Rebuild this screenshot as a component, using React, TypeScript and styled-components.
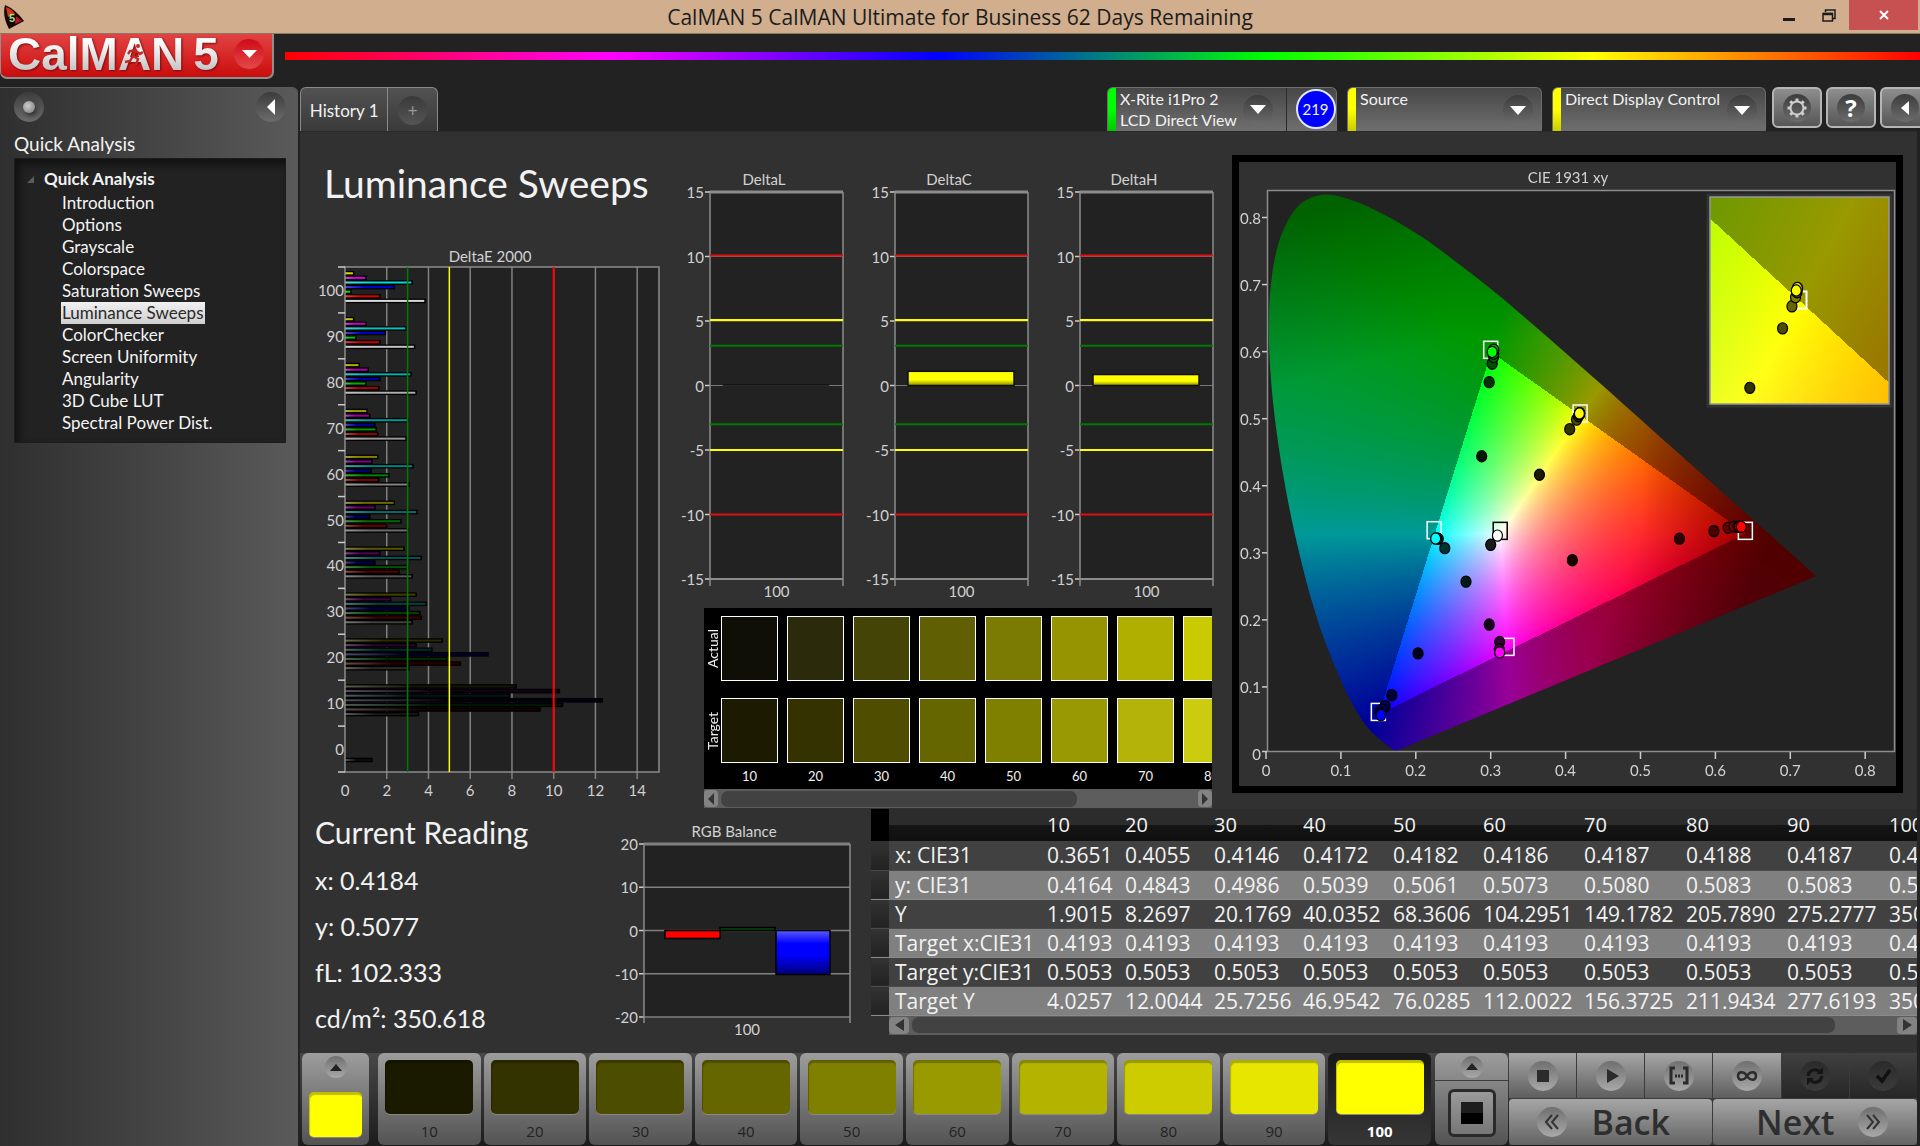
import React, { useLayoutEffect, useRef } from "react";
import styled, { createGlobalStyle, css } from "styled-components";

const HUMANIST = `Lato, "Open Sans", sans-serif`;
const SYSTEM = `"Open Sans", "Noto Sans", sans-serif`;

const GlobalStyle = createGlobalStyle`
  * { box-sizing: border-box; }
  html, body { margin: 0; background: #222; }
  body { font-family: ${HUMANIST}; color: #f2f2f2; overflow: hidden; }
  button, select { font: inherit; color: inherit; margin: 0; padding: 0; border: 0; background: none; cursor: pointer; }
  h1, h2, p, ul { margin: 0; padding: 0; }
`;

/* ---------- frame ---------- */

const Page = styled.div`
  min-height: 100vh;
  display: flex;
  flex-direction: column;
  background: #222;
`;

const TitleBar = styled.header`
  display: grid;
  grid-template-columns: 1fr auto 1fr;
  align-items: center;
  height: 34px;
  background: #d0ae8e;
  border-bottom: 1px solid #8d765f;
  color: #1c1c1c;
  font-family: ${SYSTEM};
  font-size: 21px;
`;

const AppIcon = styled.svg`
  margin-left: 3px;
`;

const WindowTitle = styled.span`
  white-space: nowrap;
  line-height: 34px;
`;

const WindowButtons = styled.div`
  display: flex;
  justify-content: flex-end;
  align-self: start;
  padding-right: 2px;
`;

const WindowButton = styled.button<{ $close?: boolean }>`
  width: ${(p) => (p.$close ? 69 : 40)}px;
  height: 30px;
  display: grid;
  place-items: center;
  background: ${(p) => (p.$close ? "#c75050" : "transparent")};
`;

const Brand = styled.div`
  display: flex;
  align-items: flex-start;
  gap: 11px;
  height: 53px;
`;

const Logo = styled.button`
  display: flex;
  align-items: center;
  justify-content: space-between;
  width: 274px;
  height: 45px;
  padding: 0 8px 4px 7px;
  border: 2px solid #8f8f8f;
  border-width: 0 2px 2px 1px;
  border-radius: 0 0 7px 7px;
  background: linear-gradient(#df4444, #d62222 60%, #c90d0d);
`;

const LogoText = styled.span`
  position: relative;
  display: flex;
  gap: 9px;
  font-family: "Liberation Sans", sans-serif;
  font-weight: 700;
  font-size: 46px;
  line-height: 40px;
  color: transparent;
  background: linear-gradient(#fff 15%, #e6e6e6 50%, #bdbdbd);
  background-clip: text;
  filter: drop-shadow(1px 1px 1px #7a0a0a);
`;

const Runner = styled.svg`
  position: absolute;
  left: 114px;
  top: 8px;
`;

const Rainbow = styled.div`
  flex: 1;
  height: 8px;
  margin-top: 18px;
  background: linear-gradient(90deg, #f00, #f0f, #00f, #0f0, #ff0, #f00);
`;

const Body = styled.div`
  flex: 1;
  display: flex;
  gap: 2px;
`;

/* ---------- shared bits ---------- */

const Disc = styled.span<{ $size: number; $dark?: boolean }>`
  flex: none;
  display: grid;
  place-items: center;
  width: ${(p) => p.$size}px;
  height: ${(p) => p.$size}px;
  border-radius: 50%;
  background: ${(p) =>
    p.$dark ? "linear-gradient(#3c3c3c, #6c6c6c)" : "linear-gradient(#6f6f6f, #a9a9a9)"};
`;

const LogoDisc = styled(Disc)`
  background: linear-gradient(#cf0a18, #e24a4a);
`;

const Arrow = ({ dir, w = 16, h = 9, fill = "#fff" }: { dir: "up" | "down" | "left" | "right"; w?: number; h?: number; fill?: string }) => {
  const pts = {
    down: `0,0 ${w},0 ${w / 2},${h}`,
    up: `0,${h} ${w},${h} ${w / 2},0`,
    left: `${w},0 ${w},${h} 0,${h / 2}`,
    right: `0,0 0,${h} ${w},${h / 2}`,
  }[dir];
  return (
    <svg width={w} height={h} aria-hidden="true">
      <polygon points={pts} fill={fill} />
    </svg>
  );
};

/* ---------- sidebar ---------- */

const Sidebar = styled.nav`
  width: 298px;
  flex: none;
  padding: 4px 12px 0 14px;
  border-top: 1px solid #5c5c5c;
  border-radius: 0 6px 0 0;
  background: linear-gradient(90deg, #2f2f2f, #444 50%, #5a5a5a);
`;

const SidebarTop = styled.div`
  display: flex;
  justify-content: space-between;
  height: 37px;
`;

const Lamp = styled.span`
  width: 12px;
  height: 12px;
  border-radius: 50%;
  background: radial-gradient(circle at 40% 40%, #ccc, #777);
  box-shadow: 2px 3px 4px #333;
`;

const SidebarTitle = styled.h2`
  font-weight: 400;
  font-size: 19px;
  line-height: 30px;
`;

const Tree = styled.div`
  height: 285px;
  margin-top: -1px;
  padding: 9px 0 0 12px;
  background: #222;
  border: 1px solid #1c1c1c;
  box-shadow: inset 4px 5px 8px #111;
`;

const TreeRoot = styled.div`
  display: flex;
  align-items: center;
  gap: 10px;
  font-weight: 700;
  font-size: 17px;
  line-height: 22px;
`;

const TreeList = styled.ul`
  list-style: none;
  padding: 2px 0 0 34px;
`;

const TreeItem = styled.li`
  display: flex;
  height: 22px;
`;

const TreeLink = styled.a<{ $active?: boolean }>`
  padding: 0 1px;
  font-size: 17px;
  line-height: 22px;
  text-decoration: none;
  white-space: nowrap;
  color: ${(p) => (p.$active ? "#2a2a2a" : "#f4f4f4")};
  background: ${(p) => (p.$active ? "linear-gradient(#f0f0f0, #cfcfcf)" : "none")};
`;

const TREE = [
  "Introduction", "Options", "Grayscale", "Colorspace", "Saturation Sweeps", "Luminance Sweeps",
  "ColorChecker", "Screen Uniformity", "Angularity", "3D Cube LUT", "Spectral Power Dist.",
];

/* ---------- top bar ---------- */

const Main = styled.main`
  flex: 1;
  min-width: 0;
  display: flex;
  flex-direction: column;
`;

const TopBar = styled.div`
  display: flex;
  justify-content: space-between;
  height: 44px;
`;

const Tabs = styled.div`
  display: flex;
  width: 138px;
  border: 1px solid #8a8a8a;
  border-bottom: 0;
  border-radius: 6px 6px 0 0;
  background: linear-gradient(#525252, #3a3a3a);
`;

const Tab = styled.button<{ $w: number }>`
  width: ${(p) => p.$w}px;
  display: grid;
  place-items: center;
  font-size: 17px;
  padding-top: 2px;
  white-space: nowrap;
  & + & { border-left: 1px solid #8a8a8a; color: #999; }
`;

const PlusDisc = styled(Disc)`
  background: linear-gradient(#3a3a3a, #555);
`;

const Devices = styled.div`
  display: flex;
  gap: 10px;
  overflow: hidden;
`;

const panelTab = css`
  border: 1px solid #6d6d6d;
  border-bottom: 0;
  border-radius: 6px 6px 0 0;
  background: linear-gradient(#474747, #6f6f6f);
  overflow: hidden;
`;

const Meter = styled.div`
  ${panelTab}
  display: flex;
  width: 230px;
`;

const Stripe = styled.span<{ $color: string; $end: string }>`
  flex: none;
  width: 8px;
  background: linear-gradient(${(p) => p.$color} 50%, ${(p) => p.$end});
`;

const MeterButton = styled.button`
  flex: 1;
  display: flex;
  align-items: flex-start;
  justify-content: space-between;
  padding: 0 13px 0 4px;
  text-align: left;
  font-size: 16px;
  line-height: 21px;
  white-space: nowrap;
`;

const MeterDisc = styled(Disc)`
  align-self: center;
`;

const Reading = styled.div`
  width: 50px;
  display: grid;
  place-items: center;
  padding: 0 0 2px 8px;
  border-left: 1px solid #2b2b2b;
`;

const Count = styled.span`
  width: 40px;
  height: 40px;
  border: 2px solid #dfe6ff;
  border-radius: 50%;
  background: #00f;
  text-align: center;
  font-size: 15px;
  line-height: 36px;
`;

const Chooser = styled.label<{ $w: number }>`
  ${panelTab}
  position: relative;
  display: flex;
  width: ${(p) => p.$w}px;
`;

const ChooserSelect = styled.select`
  appearance: none;
  flex: 1;
  min-width: 0;
  padding: 0 0 22px 4px;
  font-size: 16px;
  line-height: 21px;
  outline: none;
`;

const ChooserDisc = styled(Disc)`
  position: absolute;
  right: 8px;
  top: 7px;
  pointer-events: none;
`;

const ToolButtons = styled.div`
  display: flex;
  gap: 4px;
  margin: 0 -10px 0 -4px;
`;

const ToolButton = styled.button`
  width: 50px;
  height: 41px;
  display: grid;
  place-items: center;
  border: 2px solid #b5b5b5;
  border-radius: 6px;
  background: linear-gradient(#8e8e8e, #565656);
`;

/* ---------- content panel ---------- */

const Panel = styled.section`
  flex: 1;
  display: flex;
  flex-direction: column;
  margin-right: 3px;
  background: #313131;
  border-top: 1px solid #2a2a2a;
`;

const Upper = styled.div`
  display: flex;
  height: 677px;
`;

const Sweeps = styled.div`
  width: 375px;
  flex: none;
`;

const Heading = styled.h1`
  height: 108px;
  padding: 24px 0 0 24px;
  font-weight: 400;
  font-size: 39px;
  line-height: 54px;
  white-space: nowrap;
`;

const Middle = styled.div`
  width: 557px;
  flex: none;
  padding-top: 33px;
`;

const DeltaRow = styled.div`
  display: flex;
  height: 443px;
`;

const Compare = styled.div`
  width: 508px;
  margin-left: 29px;
  background: #000;
`;

const Swatches = styled.div`
  height: 181px;
  padding: 8px 0 0 3px;
  overflow: hidden;
`;

const SwatchRow = styled.div`
  display: flex;
  gap: 9px;
  margin-bottom: 17px;
  & > * { flex: none; }
`;

const SwatchName = styled.span`
  width: 12px;
  margin-right: -7px;
  writing-mode: vertical-rl;
  transform: rotate(180deg);
  text-align: center;
  font-size: 14px;
  line-height: 12px;
`;

const Swatch = styled.span<{ $c: string }>`
  width: 57px;
  height: 65px;
  border: 1px solid #fff;
  background: ${(p) => p.$c};
`;

const SwatchLabels = styled.div`
  display: flex;
  gap: 9px;
  margin: -15px 0 0 14px;
`;

const SwatchLabel = styled.span`
  flex: none;
  width: 57px;
  text-align: center;
  font-size: 13px;
  line-height: 22px;
`;

const Track = styled.div`
  display: flex;
  align-items: center;
  gap: 3px;
  height: 19px;
  background: #5d5d5d;
`;

const TrackButton = styled.button<{ $w: number }>`
  flex: none;
  width: ${(p) => p.$w}px;
  height: 17px;
  display: grid;
  place-items: center;
  border-radius: 4px;
  background: #838383;
`;

const TrackBed = styled.div`
  flex: 1;
`;

const Thumb = styled.div<{ $w: string }>`
  width: ${(p) => p.$w};
  height: 16px;
  border-radius: 7px;
  background: #424242;
`;

const ScrollTrack = ({ thumb, button }: { thumb: string; button: number }) => (
  <Track>
    <TrackButton $w={button} aria-label="Scroll left"><Arrow dir="left" w={button / 2 - 1} h={12} fill="#333" /></TrackButton>
    <TrackBed><Thumb $w={thumb} /></TrackBed>
    <TrackButton $w={button} aria-label="Scroll right"><Arrow dir="right" w={button / 2 - 1} h={12} fill="#333" /></TrackButton>
  </Track>
);

const Chromaticity = styled.div`
  flex: 1;
  align-self: flex-start;
  display: grid;
  margin: 23px 14px 0 0;
  border: 7px solid #000;
  background: #313131;
  & > * { grid-area: 1 / 1; width: 100%; height: auto; display: block; }
`;

const Lower = styled.div`
  flex: 1;
  display: flex;
  align-items: flex-start;
`;

const Readings = styled.div`
  width: 315px;
  flex: none;
  padding-left: 15px;
`;

const ReadingsTitle = styled.h2`
  font-weight: 400;
  font-size: 30px;
  line-height: 46px;
  margin-bottom: 2px;
`;

const ReadingLine = styled.p`
  font-size: 25px;
  line-height: 46px;
`;

const TableArea = styled.div`
  flex: 1;
  min-width: 0;
  overflow: hidden;
`;

const TableClip = styled.div`
  overflow: hidden;
`;

const TableTrack = styled.div`
  margin-left: 18px;
`;

const Data = styled.table`
  width: 1120px;
  table-layout: fixed;
  border-collapse: collapse;
  font-family: ${SYSTEM};
  font-size: 21px;
  white-space: nowrap;
  th, td { padding: 0 0 0 6px; font-weight: 400; text-align: left; }
`;

const HeadRow = styled.tr`
  height: 32px;
  font-size: 20px;
  line-height: 30px;
  background: linear-gradient(#2c2c2c 50%, #151515 50%, #0f0f0f);
  th:first-child { background: #000; }
`;

const DataRow = styled.tr<{ $light: boolean }>`
  height: 29px;
  line-height: 28px;
  background: ${(p) => (p.$light ? "#808080" : "#414141")};
  border-bottom: 1px solid ${(p) => (p.$light ? "#8a8a8a" : "#4b4b4b")};
  td:first-child { background: linear-gradient(#333, #222); }
`;

const COLS = [18, 152, 78, 89, 89, 90, 90, 101, 102, 101, 102, 108];
const LEVELS = [10, 20, 30, 40, 50, 60, 70, 80, 90, 100];
const TABLE: [string, string[]][] = [
  ["x: CIE31", ["0.3651", "0.4055", "0.4146", "0.4172", "0.4182", "0.4186", "0.4187", "0.4188", "0.4187", "0.4184"]],
  ["y: CIE31", ["0.4164", "0.4843", "0.4986", "0.5039", "0.5061", "0.5073", "0.5080", "0.5083", "0.5083", "0.5077"]],
  ["Y", ["1.9015", "8.2697", "20.1769", "40.0352", "68.3606", "104.2951", "149.1782", "205.7890", "275.2777", "350.6180"]],
  ["Target x:CIE31", LEVELS.map(() => "0.4193")],
  ["Target y:CIE31", LEVELS.map(() => "0.5053")],
  ["Target Y", ["4.0257", "12.0044", "25.7256", "46.9542", "76.0285", "112.0022", "156.3725", "211.9434", "277.6193", "350.6180"]],
];

/* ---------- footer ---------- */

const Footer = styled.footer`
  display: flex;
  height: 93px;
  margin-right: 3px;
  padding-bottom: 1px;
  background: linear-gradient(#484848, #1c1c1c);
`;

const key = css`
  border-radius: 6px;
  background: linear-gradient(#9d9d9d, #535353);
`;

const CurrentColor = styled.button`
  ${key}
  flex: none;
  display: flex;
  flex-direction: column;
  align-items: center;
  justify-content: space-between;
  width: 67px;
  margin: 0 9px 0 2px;
  padding: 3px 0 8px;
`;

const Chip = styled.span<{ $c: string; $w: number; $h: number }>`
  width: ${(p) => p.$w}px;
  height: ${(p) => p.$h}px;
  border-radius: 5px;
  background: ${(p) => p.$c};
  box-shadow: inset 1px 3px 1px rgba(0, 0, 0, 0.25), 0 1px 0 #888;
`;

const LevelKeys = styled.div`
  flex: 1;
  display: grid;
  grid-template-columns: repeat(10, 1fr);
  gap: 3px;
`;

const LevelKey = styled.button<{ $active: boolean }>`
  ${key}
  display: flex;
  flex-direction: column;
  align-items: center;
  gap: 6px;
  padding-top: 7px;
  font-family: ${SYSTEM};
  font-size: 15px;
  line-height: 22px;
  color: #222;
  ${(p) => p.$active && css`
    background: linear-gradient(#191919, #363636);
    color: #fff;
    font-weight: 700;
  `}
`;

const PatternKey = styled.div`
  ${key}
  flex: none;
  width: 73px;
  margin: 0 1px 0 4px;
  display: grid;
  grid-template-rows: 28px 1fr;
  overflow: hidden;
`;

const PatternUp = styled.button`
  display: grid;
  place-items: center;
  border-bottom: 1px solid #3c3c3c;
`;

const PatternBox = styled.button`
  place-self: center;
  width: 48px;
  height: 48px;
  display: grid;
  place-items: center;
  border: 3px solid #2a2a2a;
  border-radius: 6px;
  background: linear-gradient(#9a9a9a, #767676);
`;

const Transport = styled.div`
  flex: none;
  width: 408px;
  display: grid;
  grid-template-columns: repeat(6, 1fr);
  grid-template-rows: 45px 46px;
  gap: 1px;
  background: #3b3b3b;
`;

const TransportKey = styled.button<{ $off?: boolean }>`
  display: grid;
  place-items: center;
  background: ${(p) => (p.$off ? "linear-gradient(#404040, #262626)" : "linear-gradient(#a6a6a6, #5e5e5e)")};
`;

const DimDisc = styled(Disc)`
  background: linear-gradient(#2b2b2b, #3b3b3b);
`;

const StepKey = styled.button<{ $next?: boolean }>`
  grid-column: span 3;
  display: flex;
  align-items: center;
  justify-content: center;
  gap: 24px;
  padding: ${(p) => (p.$next ? "0 0 0 14px" : "0 14px 0 0")};
  border-radius: 4px;
  background: linear-gradient(#a6a6a6, #646464);
  font-family: ${SYSTEM};
  font-weight: 600;
  font-size: 34px;
  line-height: 40px;
  color: #2e2e2e;
`;

/* ---------- charts ---------- */

const ChartSvg = styled.svg`
  display: block;
  flex: none;
  text { font-family: ${HUMANIST}; font-size: 15px; fill: #d2d2d2; }
`;

const HUES = ["#ffff00", "#ff00ff", "#00ffff", "#0000ff", "#00ff00", "#ff0000", "#ffffff"];

/* DeltaE per level, in the order of HUES; each row runs from 100 % down to 0 %. */
const DELTA_E: number[][] = [
  [0.45, 1.04, 3.25, 2.4, 0.32, 1.71, 3.87],
  [0.45, 1.04, 2.96, 1.97, 0.56, 1.71, 3.37],
  [0.72, 1.15, 3.2, 1.71, 1.04, 1.66, 3.44],
  [1.09, 1.22, 3.04, 1.47, 1.53, 1.6, 2.96],
  [1.61, 1.33, 3.29, 1.29, 2.14, 1.65, 3.1],
  [2.4, 1.47, 3.49, 1.22, 2.72, 2.05, 3.04],
  [2.86, 1.71, 3.69, 1.47, 3.04, 2.62, 3.25],
  [3.44, 2.22, 3.93, 3.1, 3.63, 3.69, 3.25],
  [4.7, 3.44, 4.2, 6.89, 4.91, 5.56, 3.1],
  [8.23, 10.31, 7.9, 12.36, 10.46, 9.38, 3.55],
  [0, 0, 0, 0, 0, 0, 1.33],
];

const DeltaEChart = () => {
  const L = 45, T = 27, W = 314, H = 505, U = 20.87, BAND = H / 11;
  const x = (v: number) => L + v * U;
  return (
    <ChartSvg width="375" height="569" role="img" aria-label="DeltaE 2000">
      <text x="190" y="22" textAnchor="middle">DeltaE 2000</text>
      <rect x={L} y={T} width={W} height={H} fill="#222" />
      {[2, 4, 6, 8, 10, 12, 14].map((v) => (
        <line key={v} x1={x(v)} x2={x(v)} y1={T} y2={T + H + 7} stroke="#808080" strokeWidth="1.5" />
      ))}
      {DELTA_E.map((row, i) => {
        const level = 100 - i * 10;
        const lum = Math.max(0.06, level / 100);
        return row.map((v, j) =>
          v > 0 ? (
            <g key={`${i}-${j}`}>
              <rect x={L} y={T + i * BAND + 4 + j * 4.6} width={v * U} height="4.6" fill="#000" />
              <rect x={L} y={T + i * BAND + 5.3 + j * 4.6} width={Math.max(0, v * U - 1.5)} height="2" fill={HUES[j]} opacity={lum * 0.85} />
              <rect x={L} y={T + i * BAND + 5.3 + j * 4.6} width={v * U * 0.4} height="2" fill="url(#sheen)" />
            </g>
          ) : null
        );
      })}
      <defs>
        <linearGradient id="sheen">
          <stop offset="0" stopColor="#ddd" stopOpacity="0.35" />
          <stop offset="1" stopColor="#ddd" stopOpacity="0" />
        </linearGradient>
      </defs>
      <rect x={L} y={T} width={W} height={H} fill="none" stroke="#8c8c8c" strokeWidth="1.5" />
      <line x1={x(3)} x2={x(3)} y1={T} y2={T + H} stroke="#007a00" strokeWidth="1.5" />
      <line x1={x(5)} x2={x(5)} y1={T} y2={T + H} stroke="#ff0" strokeWidth="1.5" />
      <line x1={x(10)} x2={x(10)} y1={T} y2={T + H} stroke="#f00" strokeWidth="2" />
      {DELTA_E.map((_, i) => (
        <g key={i}>
          <line x1={L - 7} x2={L} y1={T + i * BAND} y2={T + i * BAND} stroke="#ccc" strokeWidth="1.5" />
          <text x={L - 1} y={T + i * BAND + 29} textAnchor="end">{100 - i * 10}</text>
        </g>
      ))}
      <line x1={L - 7} x2={L} y1={T + H} y2={T + H} stroke="#ccc" strokeWidth="1.5" />
      {[0, 2, 4, 6, 8, 10, 12, 14].map((v) => (
        <text key={v} x={x(v)} y="556" textAnchor="middle">{v}</text>
      ))}
    </ChartSvg>
  );
};

const DeltaChart = ({ title, value }: { title: string; value: number }) => {
  const L = 35, T = 27, W = 133, H = 387;
  const y = (v: number) => T + ((15 - v) / 30) * H;
  const limits: [number, string][] = [[10, "#e01010"], [5, "#ff0"], [3, "#007a00"], [-3, "#007a00"], [-5, "#ff0"], [-10, "#e01010"]];
  const h = Math.max(1, (value / 30) * H);
  return (
    <ChartSvg width="185" height="443" role="img" aria-label={title}>
      <defs>
        <linearGradient id="bar" x1="0" x2="0" y1="0" y2="1">
          <stop offset="0.6" stopColor="#ff0" />
          <stop offset="1" stopColor="#8a8a00" />
        </linearGradient>
      </defs>
      <text x="89" y="20" textAnchor="middle">{title}</text>
      <rect x={L} y={T} width={W} height={H} fill="#222" />
      {[15, 10, 5, 0, -5, -10, -15].map((v) => (
        <g key={v}>
          <line x1={L} x2={L + W} y1={y(v)} y2={y(v)} stroke="#777" strokeWidth="1" />
          <line x1={L - 5} x2={L} y1={y(v)} y2={y(v)} stroke="#ccc" strokeWidth="1.5" />
          <text x={L - 6} y={y(v) + 6} textAnchor="end">{v}</text>
        </g>
      ))}
      <line x1={L} x2={L + W} y1={T} y2={T} stroke="#8c8c8c" strokeWidth="3" />
      <line x1={L} x2={L + W} y1={T + H} y2={T + H} stroke="#8c8c8c" strokeWidth="2" />
      <path d={`M${L} ${T}V${T + H + 7}M${L + W} ${T}V${T + H + 7}`} stroke="#8c8c8c" strokeWidth="1.5" />
      {limits.map(([v, c]) => (
        <line key={v} x1={L} x2={L + W} y1={y(v) - (v > 0 ? 1 : 0)} y2={y(v) - (v > 0 ? 1 : 0)} stroke={c} strokeWidth="2" />
      ))}
      <rect x={L + 13} y={y(0) - h} width="106" height={h} fill={value > 0.1 ? "url(#bar)" : "#111"} stroke="#111" strokeWidth={value > 0.1 ? 1.5 : 0.5} />
      <text x={L + W / 2} y="432" textAnchor="middle">100</text>
    </ChartSvg>
  );
};

const RgbBalance = () => {
  const L = 29, T = 35, W = 206, H = 173;
  const y = (v: number) => T + ((20 - v) / 40) * H;
  return (
    <ChartSvg width="256" height="240" role="img" aria-label="RGB Balance">
      <defs>
        <linearGradient id="blue" x1="0" x2="0" y1="0" y2="1">
          <stop offset="0" stopColor="#5a5aff" />
          <stop offset="0.3" stopColor="#00f" />
          <stop offset="0.55" stopColor="#00f" />
          <stop offset="1" stopColor="#000078" />
        </linearGradient>
      </defs>
      <text x="119" y="28" textAnchor="middle">RGB Balance</text>
      <rect x={L} y={T} width={W} height={H} fill="#222" />
      {[20, 10, 0, -10, -20].map((v) => (
        <g key={v}>
          <line x1={L} x2={L + W} y1={y(v)} y2={y(v)} stroke="#808080" strokeWidth={v === 20 ? 3 : 1.5} />
          <line x1={L - 5} x2={L} y1={y(v)} y2={y(v)} stroke="#ccc" strokeWidth="1.5" />
          <text x={L - 6} y={y(v) + 6} textAnchor="end">{v}</text>
        </g>
      ))}
      <path d={`M${L} ${T}V${T + H + 6}M${L + W} ${T}V${T + H + 6}`} stroke="#8c8c8c" strokeWidth="1.5" />
      <rect x="50" y={y(0)} width="55" height="8" fill="#f00" stroke="#000" strokeWidth="1.5" />
      <rect x="105" y={y(0) - 3} width="55" height="3" fill="#064d06" stroke="#000" strokeWidth="1.5" />
      <rect x="161" y={y(0)} width="54" height="44" fill="url(#blue)" stroke="#000" strokeWidth="1.5" />
      <text x={L + W / 2} y="226" textAnchor="middle">100</text>
    </ChartSvg>
  );
};

/* ---------- chromaticity diagram ---------- */

const CIE_W = 657, CIE_H = 624;
const toX = (x: number) => 27 + x * 749;
const toY = (y: number) => 592 - y * 670.6;
const INSET = { x: 471, y: 35, w: 179, h: 207, cx: 0.4193, cy: 0.5053 };
const inX = (x: number) => INSET.x + INSET.w / 2 + (x - INSET.cx) * 3600;
const inY = (y: number) => INSET.y + INSET.h / 2 - (y - INSET.cy) * 4160;

const LOCUS: [number, number][] = [
  [0.1741, 0.005], [0.1714, 0.0051], [0.1689, 0.0069], [0.1644, 0.0109], [0.1566, 0.0177], [0.144, 0.0297],
  [0.1355, 0.0399], [0.1241, 0.0578], [0.1096, 0.0868], [0.0913, 0.1327], [0.0687, 0.2007], [0.0454, 0.295],
  [0.0235, 0.4127], [0.0082, 0.5384], [0.0039, 0.6548], [0.0139, 0.7502], [0.0389, 0.812], [0.0743, 0.8338],
  [0.1142, 0.8262], [0.1547, 0.8059], [0.1929, 0.7816], [0.2296, 0.7543], [0.3016, 0.6923], [0.3731, 0.6245],
  [0.4441, 0.5547], [0.5125, 0.4866], [0.5752, 0.4242], [0.627, 0.3725], [0.6658, 0.334], [0.6915, 0.3083],
  [0.719, 0.2809], [0.7347, 0.2653],
];

/* Catmull-Rom curve through the spectral locus, closed by the line of purples. */
const locusPath = () => {
  const p = LOCUS.map(([x, y]) => [toX(x), toY(y)]);
  let d = `M${p[0][0]} ${p[0][1]}`;
  for (let i = 0; i < p.length - 1; i++) {
    const a = p[Math.max(0, i - 1)], b = p[i], c = p[i + 1], e = p[Math.min(p.length - 1, i + 2)];
    d += `C${b[0] + (c[0] - a[0]) / 6} ${b[1] + (c[1] - a[1]) / 6} ${c[0] - (e[0] - b[0]) / 6} ${c[1] - (e[1] - b[1]) / 6} ${c[0]} ${c[1]}`;
  }
  return d + "Z";
};

/* Brightest displayable colour of a chromaticity; dimmed outside the gamut and towards the far red and green ends. */
const shade = (x: number, y: number): [number, number, number] => {
  const X = x / Math.max(y, 0.0001), Z = (1 - x - y) / Math.max(y, 0.0001);
  const r = 3.2406 * X - 1.5372 - 0.4986 * Z;
  const g = -0.9689 * X + 1.8758 + 0.0415 * Z;
  const b = 0.0557 * X - 0.204 + 1.057 * Z;
  const m = Math.max(r, g, b);
  let k = Math.min(r, g, b) < 0 ? 0.6 : 1;
  const redEnd = x - 0.5 + Math.max(0, 0.33 - y) * 0.35;
  const greenEnd = y - 0.62 + Math.max(0, 0.25 - x) * 0.3;
  k *= 1 - Math.min(0.47, Math.max(0, redEnd) * 2.7);
  k *= 1 - Math.min(0.36, Math.max(0, greenEnd) * 1.45);
  return [r, g, b].map((v) => 255 * k * Math.pow(Math.max(0, v / m), 0.88)) as [number, number, number];
};

const fill = (w: number, h: number, at: (px: number, py: number) => [number, number]) => {
  const c = document.createElement("canvas");
  c.width = w;
  c.height = h;
  const ctx = c.getContext("2d")!;
  const img = ctx.createImageData(w, h);
  for (let j = 0; j < h; j++)
    for (let i = 0; i < w; i++) {
      const [x, y] = at(i, j);
      const rgb = shade(x, y);
      const o = (j * w + i) * 4;
      img.data[o] = rgb[0];
      img.data[o + 1] = rgb[1];
      img.data[o + 2] = rgb[2];
      img.data[o + 3] = 255;
    }
  ctx.putImageData(img, 0, 0);
  return c;
};

type Series = { hue: [number, number, number]; target: [number, number]; points: [number, number][] };
const YELLOW: Series = {
  hue: [255, 255, 0], target: [0.4193, 0.507],
  points: TABLE[0][1].map((v, i) => [Number(v), Number(TABLE[1][1][i])]),
};
const SERIES: Series[] = [
  { hue: [255, 0, 0], target: [0.64, 0.332], points: [[0.409, 0.289], [0.552, 0.321], [0.598, 0.3325], [0.617, 0.3375], [0.625, 0.339], [0.63, 0.339], [0.632, 0.339], [0.6345, 0.3387]] },
  { hue: [0, 255, 0], target: [0.3, 0.602], points: [[0.288, 0.444], [0.298, 0.5545], [0.302, 0.582], [0.304, 0.592], [0.304, 0.597], [0.304, 0.602], [0.304, 0.603], [0.302, 0.5996]] },
  { hue: [0, 0, 255], target: [0.15, 0.062], points: [[0.203, 0.15], [0.168, 0.0877], [0.159, 0.0717], [0.155, 0.066], [0.152, 0.0625], [0.153, 0.06], [0.1535, 0.058]] },
  { hue: [0, 255, 255], target: [0.2245, 0.333], points: [[0.267, 0.257], [0.2387, 0.307], [0.23, 0.321], [0.228, 0.321], [0.2265, 0.3213]] },
  { hue: [255, 0, 255], target: [0.3217, 0.159], points: [[0.298, 0.193], [0.312, 0.167], [0.3115, 0.156], [0.312, 0.1515]] },
  { hue: [255, 255, 255], target: [0.3127, 0.332], points: [[0.3, 0.312], [0.309, 0.3257]] },
  YELLOW,
];

const Dots = ({ s, px, py }: { s: Series; px: (v: number) => number; py: (v: number) => number }) => (
  <>
    {s.points.map(([x, y], i) => {
      const last = i === s.points.length - 1;
      const k = last ? 1 : Math.min(0.9, (i + 1) / 10);
      return (
        <ellipse key={i} cx={px(x)} cy={py(y)} rx="5" ry="5.6" fill={`rgb(${s.hue.map((v) => Math.round(v * k)).join(",")})`} stroke="#000" strokeWidth="1.2" />
      );
    })}
  </>
);

const CieChart = () => {
  const ref = useRef<HTMLCanvasElement>(null);
  useLayoutEffect(() => {
    const ctx = ref.current!.getContext("2d")!;
    ctx.fillStyle = "#222";
    ctx.fillRect(28, 28, 628, 562);
    ctx.save();
    ctx.clip(new Path2D(locusPath()));
    ctx.drawImage(fill(CIE_W, CIE_H, (i, j) => [(i - 27) / 749, (592 - j) / 670.6]), 0, 0);
    ctx.restore();
    ctx.drawImage(
      fill(INSET.w, INSET.h, (i, j) => [INSET.cx + (i - INSET.w / 2) / 3600, INSET.cy - (j - INSET.h / 2) / 4160]),
      INSET.x, INSET.y
    );
  }, []);
  const ticks = [0, 0.1, 0.2, 0.3, 0.4, 0.5, 0.6, 0.7, 0.8];
  return (
    <Chromaticity>
      <canvas ref={ref} width={CIE_W} height={CIE_H} />
      <ChartSvg viewBox={`0 0 ${CIE_W} ${CIE_H}`} role="img" aria-label="CIE 1931 xy">
        <defs>
          <clipPath id="inset"><rect x={INSET.x} y={INSET.y} width={INSET.w} height={INSET.h} /></clipPath>
        </defs>
        <text x="329" y="21" textAnchor="middle">CIE 1931 xy</text>
        <rect x="28.5" y="28.5" width="627" height="561" fill="none" stroke="#8c8c8c" strokeWidth="1.5" />
        {ticks.map((v) => (
          <g key={v}>
            <line x1={toX(v)} x2={toX(v)} y1="590" y2="597" stroke="#ccc" strokeWidth="1.5" />
            <text x={toX(v)} y="614" textAnchor="middle">{v}</text>
            <line x1="23" x2="28" y1={v ? toY(v) : 589.5} y2={v ? toY(v) : 589.5} stroke="#ccc" strokeWidth="1.5" />
            <text x="22" y={toY(v) + 6} textAnchor="end">{v}</text>
          </g>
        ))}
        {SERIES.map((s, i) => (
          <g key={i}>
            <rect x={toX(s.target[0]) - 7} y={toY(s.target[1]) - 9} width="14" height="17" fill="none" stroke={i === 5 ? "#000" : "#fff"} strokeWidth="1.5" />
            <Dots s={s} px={toX} py={toY} />
          </g>
        ))}
        <rect x={INSET.x - 2} y={INSET.y - 2} width={INSET.w + 4} height={INSET.h + 4} fill="none" stroke="#333" strokeWidth="3" />
        <g clipPath="url(#inset)">
          <rect x={inX(0.4193) - 7} y={inY(0.5053) - 9} width="14" height="17" fill="none" stroke="#fff" strokeWidth="2" />
          <Dots s={YELLOW} px={inX} py={inY} />
        </g>
        <rect x={INSET.x} y={INSET.y} width={INSET.w} height={INSET.h} fill="none" stroke="#999" strokeWidth="1.5" />
      </ChartSvg>
    </Chromaticity>
  );
};

/* ---------- icons ---------- */

const Gear = () => (
  <svg width="24" height="24" viewBox="0 0 24 24" fill="none" stroke="#cfcfcf" aria-hidden="true">
    <circle cx="12" cy="12" r="6.5" strokeWidth="2" />
    {[0, 45, 90, 135, 180, 225, 270, 315].map((a) => (
      <line key={a} x1="12" y1="2.5" x2="12" y2="5.5" strokeWidth="3" transform={`rotate(${a} 12 12)`} />
    ))}
  </svg>
);

const Question = styled.span`
  font-family: ${SYSTEM};
  font-weight: 700;
  font-size: 24px;
  line-height: 28px;
  color: #fff;
`;

const Chevrons = ({ flip }: { flip?: boolean }) => (
  <svg width="16" height="18" viewBox="0 0 16 18" fill="none" stroke="#333" strokeWidth="2" aria-hidden="true">
    <path d={flip ? "M2 2L8 9L2 16M8 2L14 9L8 16" : "M8 2L2 9L8 16M14 2L8 9L14 16"} />
  </svg>
);

const Glyph = ({ kind }: { kind: string }) => (
  <svg width="24" height="20" viewBox="0 0 24 20" fill="none" stroke="#2b2b2b" strokeWidth="2" aria-hidden="true">
    {kind === "Stop" && <rect x="6" y="4" width="12" height="12" fill="#2b2b2b" stroke="none" />}
    {kind === "Play" && <path d="M8 3L20 10L8 17Z" fill="#2b2b2b" stroke="none" />}
    {kind === "Read series" && (
      <>
        <path d="M8 2H4V17H8M16 2H20V17H16" strokeWidth="3" />
        <path d="M8 10H17" strokeWidth="3" strokeDasharray="2 1" />
      </>
    )}
    {kind === "Continuous" && <path d="M12 10C9 5 3 5 3 10S9 15 12 10S21 5 21 10S15 15 12 10Z" strokeWidth="2.4" />}
    {kind === "Refresh" && (
      <g stroke="#151515" strokeWidth="3">
        <path d="M5 10A7 7 0 0 1 16 5M19 10A7 7 0 0 1 8 15" />
        <path d="M20 1V8H13ZM4 19V12H11Z" fill="#151515" stroke="none" />
      </g>
    )}
    {kind === "Accept" && <path d="M6 10L11 15L19 4" stroke="#111" strokeWidth="3.6" />}
  </svg>
);

const chip = (level: number) => {
  const v = Math.round((level / 100) * 255);
  return `rgb(${v}, ${v}, 0)`;
};

const ACTUAL = ["#0f0f08", "#2b2a0a", "#454407", "#605f03", "#7b7a02", "#969501", "#b0af00", "#caca00"];
const TARGET = ["#1c1b02", "#343300", "#4e4d00", "#666600", "#808000", "#999903", "#b3b309", "#cbcb10"];

export default function App() {
  return (
    <Page>
      <GlobalStyle />
      <TitleBar>
        <AppIcon width="22" height="26" viewBox="0 0 22 26" aria-hidden="true">
          <path d="M2 1Q12 5 21 17L6 25Q-1 12 2 1Z" fill="#180705" />
          <path d="M3 3Q9 5 12 10L5 13Z" fill="#d33a10" />
          <path d="M13 12L19 17L12 20Z" fill="#b3122a" />
          <text x="6" y="18" fontFamily="Liberation Sans, sans-serif" fontWeight="700" fontSize="11" fill="#9fe08a">5</text>
        </AppIcon>
        <WindowTitle>CalMAN 5 CalMAN Ultimate for Business 62 Days Remaining</WindowTitle>
        <WindowButtons>
          <WindowButton aria-label="Minimize">
            <svg width="14" height="12"><rect x="1" y="9" width="12" height="3" fill="#1c1c1c" /></svg>
          </WindowButton>
          <WindowButton aria-label="Restore">
            <svg width="14" height="13" fill="none" stroke="#1c1c1c">
              <path d="M3.5 3V1H13V9.5H11" strokeWidth="1.5" />
              <path d="M1 4.5H10.5V12H1Z" strokeWidth="1.5" />
              <path d="M1 5H10.5" strokeWidth="2.5" />
            </svg>
          </WindowButton>
          <WindowButton $close aria-label="Close">
            <svg width="10" height="10" stroke="#fff" strokeWidth="2"><path d="M1 1L9 9M9 1L1 9" /></svg>
          </WindowButton>
        </WindowButtons>
      </TitleBar>

      <Brand>
        <Logo aria-label="CalMAN 5 menu">
          <LogoText>
            <span>CalMAN</span>
            <span>5</span>
            <Runner width="26" height="26" viewBox="0 0 26 26" fill="none" stroke="#c62626" strokeWidth="2.4" aria-hidden="true">
              <circle cx="16" cy="4" r="2" fill="#c62626" stroke="none" />
              <path d="M14 7L11 14L16 17L14 23M11 14L8 19L3 20M14 8L8 9L6 12M14 9L18 12L21 10" />
            </Runner>
          </LogoText>
          <LogoDisc $size={30}><Arrow dir="down" w={15} h={8} /></LogoDisc>
        </Logo>
        <Rainbow />
      </Brand>

      <Body>
        <Sidebar>
          <SidebarTop>
            <Disc $size={30} $dark><Lamp /></Disc>
            <Disc as="button" $size={30} $dark aria-label="Collapse"><Arrow dir="left" w={8} h={16} /></Disc>
          </SidebarTop>
          <SidebarTitle>Quick Analysis</SidebarTitle>
          <Tree>
            <TreeRoot>
              <svg width="7" height="7" aria-hidden="true"><path d="M7 0V7H0Z" fill="#5a5a5a" /></svg>
              Quick Analysis
            </TreeRoot>
            <TreeList>
              {TREE.map((t) => (
                <TreeItem key={t}>
                  <TreeLink href="#" $active={t === "Luminance Sweeps"}>{t}</TreeLink>
                </TreeItem>
              ))}
            </TreeList>
          </Tree>
        </Sidebar>

        <Main>
          <TopBar>
            <Tabs>
              <Tab $w={87}>History 1</Tab>
              <Tab $w={50} aria-label="Add history"><PlusDisc $size={29}>+</PlusDisc></Tab>
            </Tabs>
            <Devices>
              <Meter>
                <Stripe $color="#0f0" $end="#00c800" />
                <MeterButton>
                  <span>X-Rite i1Pro 2<br />LCD Direct View</span>
                  <MeterDisc $size={30} $dark><Arrow dir="down" /></MeterDisc>
                </MeterButton>
                <Reading><Count>219</Count></Reading>
              </Meter>
              <Chooser $w={195}>
                <Stripe $color="#ff0" $end="#cc0" />
                <ChooserSelect aria-label="Source"><option>Source</option></ChooserSelect>
                <ChooserDisc $size={30} $dark><Arrow dir="down" /></ChooserDisc>
              </Chooser>
              <Chooser $w={214}>
                <Stripe $color="#ff0" $end="#cc0" />
                <ChooserSelect aria-label="Direct Display Control"><option>Direct Display Control</option></ChooserSelect>
                <ChooserDisc $size={30} $dark><Arrow dir="down" /></ChooserDisc>
              </Chooser>
              <ToolButtons>
                <ToolButton aria-label="Settings"><Disc $size={28} $dark><Gear /></Disc></ToolButton>
                <ToolButton aria-label="Help"><Disc $size={28} $dark><Question>?</Question></Disc></ToolButton>
                <ToolButton aria-label="Collapse panel"><Disc $size={28} $dark><Arrow dir="left" w={8} h={14} /></Disc></ToolButton>
              </ToolButtons>
            </Devices>
          </TopBar>

          <Panel>
            <Upper>
              <Sweeps>
                <Heading>Luminance Sweeps</Heading>
                <DeltaEChart />
              </Sweeps>
              <Middle>
                <DeltaRow>
                  <DeltaChart title="DeltaL" value={0.05} />
                  <DeltaChart title="DeltaC" value={1.1} />
                  <DeltaChart title="DeltaH" value={0.85} />
                </DeltaRow>
                <Compare>
                  <Swatches>
                    <SwatchRow>
                      <SwatchName>Actual</SwatchName>
                      {ACTUAL.map((c) => <Swatch key={c} $c={c} />)}
                    </SwatchRow>
                    <SwatchRow>
                      <SwatchName>Target</SwatchName>
                      {TARGET.map((c) => <Swatch key={c} $c={c} />)}
                    </SwatchRow>
                    <SwatchLabels>
                      {LEVELS.slice(0, 8).map((l) => <SwatchLabel key={l}>{l}</SwatchLabel>)}
                    </SwatchLabels>
                  </Swatches>
                  <ScrollTrack thumb="75%" button={14} />
                </Compare>
              </Middle>
              <CieChart />
            </Upper>

            <Lower>
              <Readings>
                <ReadingsTitle>Current Reading</ReadingsTitle>
                <ReadingLine>x: 0.4184</ReadingLine>
                <ReadingLine>y: 0.5077</ReadingLine>
                <ReadingLine>fL: 102.333</ReadingLine>
                <ReadingLine>cd/m²: 350.618</ReadingLine>
              </Readings>
              <RgbBalance />
              <TableArea>
                <TableClip>
                  <Data>
                    <colgroup>{COLS.map((w, i) => <col key={i} width={w} />)}</colgroup>
                    <thead>
                      <HeadRow>
                        <th /><th />
                        {LEVELS.map((l) => <th key={l} scope="col">{l}</th>)}
                      </HeadRow>
                    </thead>
                    <tbody>
                      {TABLE.map(([name, cells], i) => (
                        <DataRow key={name} $light={i % 2 === 1}>
                          <td />
                          <th scope="row">{name}</th>
                          {cells.map((c, j) => <td key={j}>{c}</td>)}
                        </DataRow>
                      ))}
                    </tbody>
                  </Data>
                </TableClip>
                <TableTrack><ScrollTrack thumb="94%" button={20} /></TableTrack>
              </TableArea>
            </Lower>
          </Panel>

          <Footer>
            <CurrentColor aria-label="Current color">
              <Disc $size={22}><Arrow dir="up" w={12} h={7} fill="#222" /></Disc>
              <Chip $c="#ff0" $w={53} $h={45} />
            </CurrentColor>
            <LevelKeys>
              {LEVELS.map((l) => (
                <LevelKey key={l} $active={l === 100}>
                  <Chip $c={chip(l)} $w={88} $h={54} />
                  {l}
                </LevelKey>
              ))}
            </LevelKeys>
            <PatternKey>
              <PatternUp aria-label="More patterns"><Disc $size={22}><Arrow dir="up" w={12} h={7} fill="#222" /></Disc></PatternUp>
              <PatternBox aria-label="Window pattern">
                <svg width="22" height="22"><rect width="22" height="22" fill="#000" /><rect width="22" height="11" fill="#1d1d1d" /></svg>
              </PatternBox>
            </PatternKey>
            <Transport>
              {["Stop", "Play", "Read series", "Continuous"].map((k) => (
                <TransportKey key={k} aria-label={k}><Disc $size={30}><Glyph kind={k} /></Disc></TransportKey>
              ))}
              {["Refresh", "Accept"].map((k) => (
                <TransportKey key={k} $off aria-label={k}><DimDisc $size={30}><Glyph kind={k} /></DimDisc></TransportKey>
              ))}
              <StepKey><Disc $size={30}><Chevrons /></Disc>Back</StepKey>
              <StepKey $next>Next<Disc $size={30}><Chevrons flip /></Disc></StepKey>
            </Transport>
          </Footer>
        </Main>
      </Body>
    </Page>
  );
}
